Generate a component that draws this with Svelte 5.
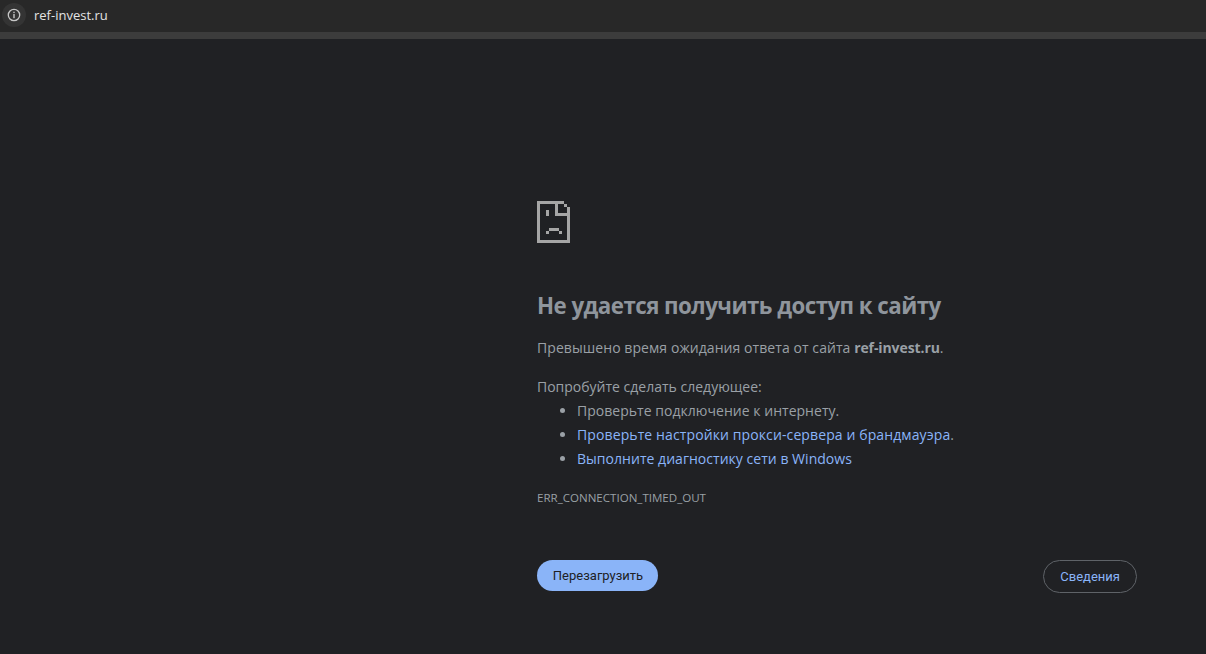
<script>
	const steps = [
		{ text: 'Проверьте подключение к интернету.' },
		{ text: 'Проверьте настройки прокси-сервера и брандмауэра', link: true, dot: true, wide: true },
		{ text: 'Выполните диагностику сети в Windows', link: true }
	];
</script>

<div class="page">
	<header class="toolbar">
		<div class="site-info">
			<svg width="14" height="14" viewBox="0 0 14 14" fill="none">
				<circle cx="7" cy="7" r="5.7" stroke="#c7c7c7" stroke-width="1.3" />
				<rect x="6.3" y="6" width="1.4" height="4.2" fill="#c7c7c7" />
				<rect x="6.3" y="3.7" width="1.4" height="1.4" fill="#c7c7c7" />
			</svg>
		</div>
		<span class="url">ref-invest.ru</span>
	</header>
	<div class="strip"></div>

	<main class="content">
		<svg class="sad" width="33" height="42" viewBox="0 0 33 42" shape-rendering="crispEdges" fill="#a6a6a6">
			<rect x="0" y="0" width="3" height="42" />
			<rect x="0" y="0" width="27" height="3" />
			<rect x="0" y="39" width="33" height="3" />
			<rect x="30" y="6" width="3" height="36" />
			<rect x="18" y="0" width="3" height="15" />
			<rect x="18" y="12" width="15" height="3" />
			<rect x="27" y="3" width="3" height="3" />
			<rect x="9" y="9" width="3" height="6" />
			<rect x="12" y="27" width="10" height="3" />
			<rect x="9" y="30" width="3" height="3" />
			<rect x="22" y="30" width="3" height="3" />
		</svg>

		<h1>Не удается получить доступ к сайту</h1>
		<p class="summary">Превышено время ожидания ответа от сайта <b>ref-invest.ru</b>.</p>
		<p class="try">Попробуйте сделать следующее:</p>
		<ul>
			{#each steps as step}
				<li>
					{#if step.link}<a href="#top" class:wide={step.wide}>{step.text}</a>{:else}{step.text}{/if}{#if step.dot}.{/if}
				</li>
			{/each}
		</ul>
		<div class="code">ERR_CONNECTION_TIMED_OUT</div>
		<div class="buttons">
			<button class="reload">Перезагрузить</button>
			<button class="details">Сведения</button>
		</div>
	</main>
</div>

<style>
	:global(body) {
		background: #202124;
	}

	.page {
		height: 654px;
		overflow: hidden;
		background: #202124;
		font-family: 'Open Sans', 'Noto Sans', sans-serif;
	}

	.toolbar {
		height: 32px;
		background: #282828;
		display: flex;
		align-items: center;
		gap: 6px;
	}

	.site-info {
		width: 24px;
		height: 24px;
		margin: 0 0 2px 2px;
		border-radius: 50%;
		background: #343434;
		display: flex;
		align-items: center;
		justify-content: center;
		flex: none;
	}

	.url {
		margin: 0 0 2px 2px;
		font-size: 13px;
		color: #e3e3e3;
	}

	.strip {
		height: 7px;
		background: #3c3c3c;
	}

	.content {
		width: 600px;
		margin-left: 537px;
		padding-top: 162px;
		color: #9aa0a6;
		font-size: 14px;
	}

	.sad {
		display: block;
	}

	h1 {
		margin: 47px 0 0;
		font-size: 22.3px;
		line-height: 32px;
		font-weight: 700;
		letter-spacing: -0.535px;
		color: #8f959c;
	}

	p {
		margin: 0;
		line-height: 24px;
	}

	.summary {
		margin-top: 14px;
		letter-spacing: 0.07px;
	}

	.summary b {
		letter-spacing: -0.1px;
	}

	.try {
		margin-top: 15px;
	}

	ul {
		margin: 0;
		padding: 0 0 0 40px;
		line-height: 24px;
		letter-spacing: 0.03px;
	}

	a {
		color: #8ab4f8;
		text-decoration: none;
	}

	.wide {
		letter-spacing: 0.11px;
	}

	.code {
		margin-top: 19px;
		font-size: 11.55px;
		line-height: 16px;
	}

	.buttons {
		display: flex;
		justify-content: space-between;
		align-items: flex-start;
		margin-top: 54px;
	}

	button {
		border-radius: 17px;
		font-family: Roboto, sans-serif;
		font-size: 13px;
	}

	.reload {
		width: 121px;
		height: 31px;
		padding: 0 0 0 1px;
		background: #8ab4f8;
		border: none;
		color: #202124;
	}

	.details {
		height: 33px;
		padding: 0 16px;
		background: transparent;
		border: 1px solid #5f6368;
		color: #8ab4f8;
	}
</style>
